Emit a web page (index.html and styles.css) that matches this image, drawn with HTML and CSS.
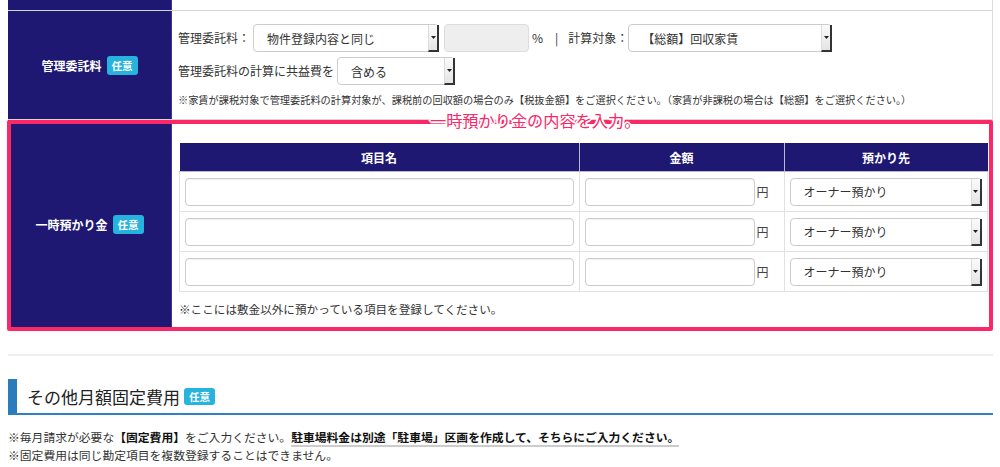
FILE: index.html
```html
<!DOCTYPE html>
<html lang="ja">
<head>
<meta charset="utf-8">
<title>一時預かり金</title>
<link rel="stylesheet" href="styles.css">
</head>
<body>
<div class="page">
  <div class="form">
    <div class="row row-top">
      <div class="label"></div>
      <div class="content"></div>
    </div>
    <div class="row row-fee">
      <div class="label"><span class="label-text">管理委託料</span><span class="badge">任意</span></div>
      <div class="content">
        <div class="line">
          <span class="txt">管理委託料：</span>
          <span class="sel w185"><select><option>物件登録内容と同じ</option></select><span class="arrow"><svg width="5" height="3" viewBox="0 0 5 3"><path d="M0 0h5L2.5 3z" fill="#222"/></svg></span></span>
          <span class="gray-input"></span>
          <span class="txt pct">%</span>
          <span class="txt bar">|</span>
          <span class="txt">計算対象：</span>
          <span class="sel w203"><select><option>【総額】回収家賃</option></select><span class="arrow"><svg width="5" height="3" viewBox="0 0 5 3"><path d="M0 0h5L2.5 3z" fill="#222"/></svg></span></span>
        </div>
        <div class="line">
          <span class="txt">管理委託料の計算に共益費を</span>
          <span class="sel w117"><select><option>含める</option></select><span class="arrow"><svg width="5" height="3" viewBox="0 0 5 3"><path d="M0 0h5L2.5 3z" fill="#222"/></svg></span></span>
        </div>
        <p class="note-s">※家賃が課税対象で管理委託料の計算対象が、課税前の回収額の場合のみ【税抜金額】をご選択ください。（家賃が非課税の場合は【総額】をご選択ください。）</p>
      </div>
    </div>
    <div class="row row-deposit">
      <div class="label"><span class="label-text">一時預かり金</span><span class="badge">任意</span></div>
      <div class="content">
        <table class="items">
          <thead>
            <tr><th class="c1">項目名</th><th class="c2">金額</th><th class="c3">預かり先</th></tr>
          </thead>
          <tbody>
            <tr>
              <td><input class="in name" type="text"></td>
              <td><div class="amt"><input class="in money" type="text"><span class="yen">円</span></div></td>
              <td><span class="sel w191"><select><option>オーナー預かり</option></select><span class="arrow"><svg width="5" height="3" viewBox="0 0 5 3"><path d="M0 0h5L2.5 3z" fill="#222"/></svg></span></span></td>
            </tr>
            <tr>
              <td><input class="in name" type="text"></td>
              <td><div class="amt"><input class="in money" type="text"><span class="yen">円</span></div></td>
              <td><span class="sel w191"><select><option>オーナー預かり</option></select><span class="arrow"><svg width="5" height="3" viewBox="0 0 5 3"><path d="M0 0h5L2.5 3z" fill="#222"/></svg></span></span></td>
            </tr>
            <tr>
              <td><input class="in name" type="text"></td>
              <td><div class="amt"><input class="in money" type="text"><span class="yen">円</span></div></td>
              <td><span class="sel w191"><select><option>オーナー預かり</option></select><span class="arrow"><svg width="5" height="3" viewBox="0 0 5 3"><path d="M0 0h5L2.5 3z" fill="#222"/></svg></span></span></td>
            </tr>
          </tbody>
        </table>
        <p class="note">※ここには敷金以外に預かっている項目を登録してください。</p>
      </div>
    </div>
    <div class="annot"><span class="annot-label">一時預かり金の内容を入力。</span></div>
  </div>
  <div class="sep"></div>
  <h2 class="heading"><span class="heading-text">その他月額固定費用</span><span class="badge badge-h">任意</span></h2>
  <p class="foot first">※毎月請求が必要な<b>【固定費用】</b>をご入力ください。<b class="uline">駐車場料金は別途「駐車場」区画を作成して、そちらにご入力ください。</b></p>
  <p class="foot">※固定費用は同じ勘定項目を複数登録することはできません。</p>
</div>
</body>
</html>
```

FILE: styles.css
```css
html, body {
  margin: 0;
  padding: 0;
  background: #fff;
}
body {
  font-family: "Noto Sans CJK JP", "Noto Sans", sans-serif;
  color: #333;
  font-size: 12px;
}
.page {
  width: 985px;
  margin-left: 8px;
}
.form {
  position: relative;
  border-right: 1px solid #ddd;
}
.row {
  display: flex;
  border-bottom: 1px solid #d4d4d4;
}
.label {
  width: 163px;
  flex: none;
  background: #1e1873;
  border-right: 1px solid #3b3790;
  display: flex;
  align-items: center;
  justify-content: center;
  gap: 5px;
}
.label-text {
  color: #fff;
  font-weight: bold;
  font-size: 12px;
}
.badge {
  display: inline-block;
  background: #26b3dd;
  color: #fff;
  font-weight: bold;
  font-size: 10.5px;
  line-height: 19px;
  height: 19px;
  padding: 0 5px;
  border-radius: 3px;
}
.content {
  flex: 1;
  min-width: 0;
  padding: 0 5px 0 6px;
}
.row-top .content, .row-top .label {
  height: 10px;
}
.row-fee .content {
  padding-top: 13px;
  padding-bottom: 13px;
}
.line {
  display: flex;
  align-items: center;
  height: 28px;
  margin-bottom: 5px;
}
.txt {
  line-height: 28px;
  white-space: nowrap;
}
.line .txt:first-child {
  margin-right: 3px;
}
.pct {
  margin-left: 3px;
}
.bar {
  margin-left: 12px;
  margin-right: 10px;
}
.sel {
  display: inline-flex;
  align-items: stretch;
  height: 28px;
  box-sizing: border-box;
  border: 1px solid #ccc;
  border-radius: 4px;
  background: #fff;
}
.sel select {
  appearance: none;
  -webkit-appearance: none;
  border: 0;
  background: transparent;
  font: inherit;
  font-size: 12px;
  color: #333;
  padding: 0 0 0 13px;
  flex: 1;
  min-width: 0;
  outline: none;
}
.arrow {
  width: 8px;
  flex: none;
  background: linear-gradient(#fbfbfb, #e4e4e4);
  border-left: 1px solid #ddd;
  border-right: 2px solid #333;
  border-bottom: 2px solid #333;
  margin-bottom: -1px;
  margin-right: -1px;
  display: flex;
  align-items: center;
  justify-content: center;
}
.w185 { width: 186px; }
.w203 { width: 204px; }
.w117 { width: 118px; }
.w191 { width: 192px; }
.gray-input {
  display: inline-block;
  width: 85px;
  height: 28px;
  box-sizing: border-box;
  background: #eee;
  border: 1px solid #ddd;
  border-radius: 4px;
  margin-left: 5px;
}
.note-s {
  margin: 9px 0 0;
  font-size: 10.2px;
  line-height: 12px;
  white-space: nowrap;
}
.row-deposit .content {
  padding: 23px 5px 10px 7px;
}
.items {
  border-collapse: collapse;
  width: 808px;
  table-layout: fixed;
}
.items th {
  background: #1e1873;
  color: #fff;
  font-weight: bold;
  font-size: 12px;
  height: 28px;
  padding: 0;
  border: 1px solid #b9b9cf;
  border-top: 0;
}
.items th:first-child { border-left: 0; }
.items th:last-child { border-right: 0; }
.c1 { width: 399px; }
.c2 { width: 204px; }
.c3 { width: 203px; }
.items td {
  border: 1px solid #e2e2e2;
  height: 40px;
  padding: 0 5px;
  box-sizing: border-box;
  vertical-align: middle;
}
.in {
  display: block;
  height: 28px;
  box-sizing: border-box;
  border: 1px solid #ccc;
  border-radius: 4px;
  box-shadow: inset 0 1px 1px rgba(0,0,0,0.06);
  background: #fff;
  font: inherit;
  padding: 0 6px;
}
.name { width: 389px; }
.amt {
  display: flex;
  align-items: center;
  gap: 2px;
}
.money { width: 170px; }
.yen {
  font-size: 12px;
  color: #444;
}
.note {
  margin: 8px 0 0;
  font-size: 11.6px;
  line-height: 18px;
}
.annot {
  position: absolute;
  left: -1px;
  top: 120px;
  width: 986px;
  height: 211px;
  box-sizing: border-box;
  border: 4px solid #fb2766;
  border-radius: 2px;
  pointer-events: none;
}
.annot-label {
  position: absolute;
  left: 419px;
  top: -13px;
  font-size: 16.2px;
  line-height: 18px;
  color: #fb2766;
  white-space: nowrap;
  text-shadow: 1px 0 0 #fff, -1px 0 0 #fff, 0 1px 0 #fff, 0 -1px 0 #fff,
    2px 0 0 #fff, -2px 0 0 #fff, 0 2px 0 #fff, 0 -2px 0 #fff,
    1px 1px 0 #fff, -1px -1px 0 #fff, 1px -1px 0 #fff, -1px 1px 0 #fff;
}
.sep {
  margin-top: 25px;
  height: 2px;
  background: #f0f0f0;
}
.heading {
  margin: 23px 0 0;
  height: 34px;
  border-left: 9px solid #2b7cba;
  border-bottom: 2px solid #2f82c2;
  padding-left: 10px;
  display: flex;
  align-items: center;
  gap: 4px;
  font-weight: normal;
}
.heading-text {
  font-size: 17px;
  color: #222;
}
.badge-h {
  height: 17px;
  line-height: 17px;
  margin-top: 1px;
}
.foot {
  margin: 0;
  font-size: 11.8px;
  line-height: 18px;
  white-space: nowrap;
}
.foot.first {
  margin-top: 13px;
}
.foot b {
  color: #111;
}
.uline {
  border-bottom: 2px solid #ccc;
}
```
